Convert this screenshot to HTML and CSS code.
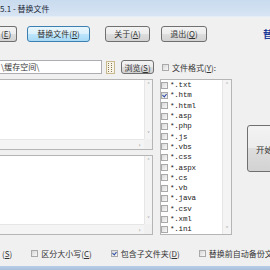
FILE: index.html
```html
<!DOCTYPE html>
<html lang="zh-CN">
<head>
    <meta charset="UTF-8">
    <title>替换文件</title>
    <link rel="stylesheet" href="styles.css">
</head>
<body>
    <div class="titlebar"><span class="title">5.1 - 替换文件</span></div>

    <div class="toolbar">
        <button class="btn btn-cut">(<u>E</u>)</button>
        <button class="btn btn-active">替换文件(<u>R</u>)</button>
        <button class="btn btn-about">关于(<u>A</u>)</button>
        <button class="btn btn-quit">退出(<u>Q</u>)</button>
        <span class="brand">替换</span>
    </div>

    <div class="pathrow">
        <div class="path">\缓存空间\</div>
        <span class="pick">
            <svg width="5" height="9" viewBox="0 0 5 9">
                <g fill="#8a7a55">
                    <rect x="0" y="0" width="1" height="1"/><rect x="3" y="0" width="1" height="1"/>
                    <rect x="0" y="2" width="1" height="1"/><rect x="3" y="2" width="1" height="1"/>
                    <rect x="0" y="4" width="1" height="1"/><rect x="3" y="4" width="1" height="1"/>
                    <rect x="0" y="6" width="1" height="1"/><rect x="3" y="6" width="1" height="1"/>
                    <rect x="0" y="8" width="1" height="1"/><rect x="3" y="8" width="1" height="1"/>
                </g>
            </svg>
        </span>
        <button class="btn btn-browse">浏览(<u>S</u>)</button>
        <label class="check"><span class="box"></span>文件格式(<u>Y</u>):</label>
    </div>

    <div class="main">
        <div class="editors">
            <div class="editor editor-top">
                <div class="editor-body"></div>
                <div class="vscroll"><span class="arrow">&#708;</span><span class="arrow">&#709;</span></div>
                <div class="hscroll"><span class="arrow">&#8250;</span></div>
                <div class="corner"></div>
            </div>
            <div class="editor editor-bottom">
                <div class="editor-body"></div>
                <div class="vscroll"><span class="arrow">&#708;</span><span class="arrow">&#709;</span></div>
                <div class="hscroll"><span class="arrow">&#8250;</span></div>
                <div class="corner"></div>
            </div>
        </div>

        <div class="list">
            <div class="list-items" id="listItems"></div>
            <div class="vscroll"><span class="arrow">&#708;</span><span class="arrow">&#709;</span></div>
        </div>

        <div class="actions">
            <button class="btn btn-start">开始替换</button>
        </div>
    </div>

    <div class="options">
        <label class="check opt-first">(<u>S</u>)</label>
        <label class="check"><span class="box"></span>区分大小写(<u>C</u>)</label>
        <label class="check"><span class="box checked"></span>包含子文件夹(<u>D</u>)</label>
        <label class="check"><span class="box"></span>替换前自动备份文件</label>
    </div>

    <div class="taskbar"></div>

    <script>
        const exts = ['txt', 'htm', 'html', 'asp', 'php', 'js', 'vbs', 'css', 'aspx', 'cs', 'vb', 'java', 'csv', 'xml', 'ini'];
        const listItems = document.getElementById('listItems');
        exts.forEach(ext => {
            const row = document.createElement('div');
            row.className = 'list-row';
            const box = ext === 'htm' ? 'box checked' : 'box';
            row.innerHTML = `<span class="${box}"></span><span class="ext">*.${ext}</span>`;
            listItems.appendChild(row);
        });
    </script>
</body>
</html>
```

FILE: styles.css
```css
body {
    margin: 0;
    width: 270px;
    height: 270px;
    overflow: hidden;
    background-color: #f0f0f0;
    font-family: "Noto Sans CJK SC", sans-serif;
    font-size: 8px;
    color: #333;
}
u {
    text-decoration: underline;
}
.titlebar {
    height: 16px;
    background: linear-gradient(#c9dbef, #d7e4f3);
    border-bottom: 1px solid #e4ecf6;
    display: flex;
    align-items: center;
    overflow: hidden;
}
.title {
    white-space: nowrap;
    color: #1e2a3a;
}
.btn {
    font-family: "Noto Sans CJK SC", sans-serif;
    font-size: 8px;
    color: #333;
    height: 16px;
    padding: 0;
    border: 1px solid #707070;
    border-radius: 3px;
    background: linear-gradient(#f3f3f3, #ececec 50%, #dedede 50%, #d2d2d2);
    box-sizing: border-box;
    white-space: nowrap;
    flex: none;
}
.btn-active {
    border-color: #3c7fb1;
    background: linear-gradient(#eaf6fd, #d9f0fc 50%, #bee6fd 50%, #a7d9f5);
}
.toolbar {
    display: flex;
    align-items: center;
    margin-top: 8px;
    height: 17px;
}
.btn-cut {
    width: 17px;
    text-align: left;
    padding-left: 1px;
    border-left: none;
    border-radius: 0 3px 3px 0;
}
.btn-active {
    width: 63px;
    margin-left: 10px;
}
.btn-about {
    width: 45px;
    margin-left: 15px;
}
.btn-quit {
    width: 46px;
    margin-left: 11px;
}
.brand {
    margin-left: 56px;
    font-size: 10px;
    font-weight: bold;
    color: #1c3b98;
    white-space: nowrap;
    flex: none;
}
.pathrow {
    display: flex;
    align-items: center;
    margin-top: 18px;
    height: 14px;
}
.path {
    width: 102px;
    flex: none;
    height: 14px;
    box-sizing: border-box;
    background: #fff;
    border: 1px solid #abadb3;
    border-left: none;
    padding-left: 1px;
    line-height: 12px;
    white-space: nowrap;
}
.pick {
    flex: none;
    width: 9px;
    height: 13px;
    margin-left: 4px;
    box-sizing: border-box;
    border: 1px solid #c8b98e;
    background: #f7f3e6;
    display: flex;
    align-items: center;
    justify-content: center;
}
.btn-browse {
    width: 33px;
    height: 14px;
    margin-left: 6px;
}
.check {
    display: flex;
    align-items: center;
    white-space: nowrap;
    flex: none;
}
.pathrow .check {
    margin-left: 8px;
}
.box {
    width: 7px;
    height: 7px;
    box-sizing: border-box;
    border: 1px solid #a9a9a9;
    background: linear-gradient(135deg, #d8d8d8, #f8f8f8);
    margin-right: 3px;
    flex: none;
    position: relative;
}
.box.checked::after {
    content: "";
    position: absolute;
    left: 1px;
    top: 0;
    width: 2px;
    height: 3px;
    border-right: 1px solid #2a4aa6;
    border-bottom: 1px solid #2a4aa6;
    transform: rotate(40deg);
}
.main {
    display: flex;
    margin-top: 5px;
    height: 156px;
}
.editors {
    flex: none;
    width: 153px;
    display: flex;
    flex-direction: column;
    gap: 5px;
}
.editor {
    display: grid;
    grid-template-columns: 1fr 8px;
    grid-template-rows: 1fr 10px;
    background: #fff;
    border: 1px solid #b5b5b5;
    border-left: none;
    box-sizing: border-box;
}
.editor-top {
    height: 71px;
}
.editor-bottom {
    height: 80px;
}
.vscroll {
    background: #f4f4f4;
    border-left: 1px solid #e6e6e6;
    display: flex;
    flex-direction: column;
    justify-content: space-between;
    align-items: center;
}
.hscroll {
    background: #f4f4f4;
    border-top: 1px solid #e6e6e6;
    display: flex;
    justify-content: flex-end;
    align-items: center;
    padding-right: 3px;
}
.corner {
    background: #f0f0f0;
}
.arrow {
    font-family: "DejaVu Sans", sans-serif;
    font-size: 6px;
    line-height: 10px;
    color: #888;
}
.list {
    flex: none;
    width: 72px;
    margin-left: 7px;
    box-sizing: border-box;
    border: 1px solid #b5b5b5;
    background: #fff;
    display: grid;
    grid-template-columns: 1fr 9px;
}
.list-items {
    display: grid;
    grid-auto-rows: 10.3px;
    align-content: start;
}
.list-row {
    display: flex;
    align-items: center;
}
.list-row .box {
    margin-right: 2px;
}
.ext {
    font-family: "Liberation Mono", monospace;
    font-size: 7.5px;
    letter-spacing: -0.2px;
    color: #222;
}
.actions {
    flex: none;
    margin-left: 15px;
    padding-top: 46px;
}
.btn-start {
    width: 60px;
    height: 47px;
    font-size: 8.5px;
    text-align: left;
    padding-left: 8px;
}
.options {
    display: flex;
    align-items: center;
    margin-top: 12px;
    height: 12px;
}
.opt-first {
    margin-left: 2px;
}
.options .check + .check {
    margin-left: 19px;
}
.taskbar {
    margin-top: 7px;
    height: 10px;
    background: linear-gradient(#b9cde6, #8fabd0);
}
```
